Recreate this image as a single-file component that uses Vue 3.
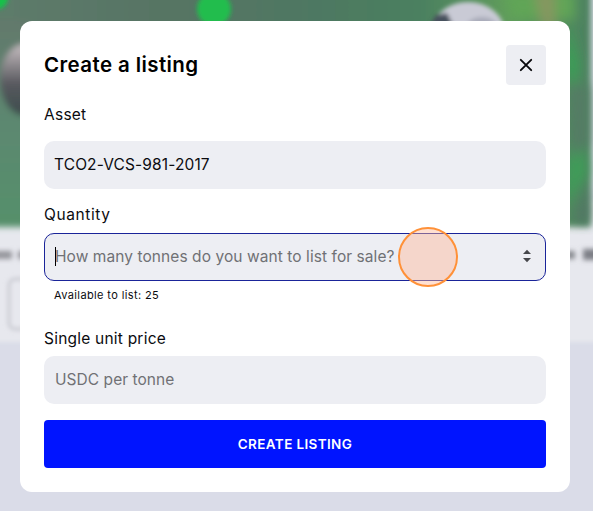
<script setup>
import { ref } from 'vue'

const asset = ref('TCO2-VCS-981-2017')
const available = ref(25)
</script>

<template>
  <main class="page">
    <div class="backdrop" aria-hidden="true">
      <svg width="593" height="511" viewBox="0 0 593 511">
        <defs>
          <filter id="soft" x="-30%" y="-30%" width="160%" height="160%"><feGaussianBlur stdDeviation="3" /></filter>
          <filter id="softer" x="-60%" y="-60%" width="220%" height="220%"><feGaussianBlur stdDeviation="6" /></filter>
          <filter id="edge" x="-30%" y="-30%" width="160%" height="160%"><feGaussianBlur stdDeviation="2" /></filter>
          <filter id="words" filterUnits="userSpaceOnUse" x="-20" y="230" width="640" height="50"><feGaussianBlur stdDeviation="2.6" /></filter>
          <linearGradient id="photo" x1="0" y1="0" x2="1" y2="0">
            <stop offset="0" stop-color="#5e7c6b" />
            <stop offset=".3" stop-color="#577464" />
            <stop offset=".55" stop-color="#4e7862" />
            <stop offset=".72" stop-color="#4b8060" />
            <stop offset=".86" stop-color="#5f9b5c" />
            <stop offset="1" stop-color="#4c8060" />
          </linearGradient>
          <linearGradient id="leftside" x1="0" y1="0" x2="0" y2="1">
            <stop offset="0" stop-color="#63796c" />
            <stop offset=".5" stop-color="#5c8870" />
            <stop offset="1" stop-color="#56906b" />
          </linearGradient>
          <linearGradient id="helmet" x1="0" y1="0" x2="0" y2="1">
            <stop offset="0" stop-color="#c9c0c4" />
            <stop offset=".3" stop-color="#8b878b" />
            <stop offset=".55" stop-color="#58595f" />
            <stop offset="1" stop-color="#3c4c4c" />
          </linearGradient>
        </defs>
        <rect width="593" height="511" fill="#dadce8" />
        <rect x="-20" y="200" width="640" height="142" fill="#e7e8ee" filter="url(#edge)" />
        <g filter="url(#soft)">
          <rect x="-20" y="-20" width="611" height="247" fill="url(#photo)" />
          <rect x="-20" y="20" width="50" height="207" fill="url(#leftside)" />
          <ellipse cx="25" cy="80" rx="25" ry="36" fill="url(#helmet)" />
        </g>
        <g filter="url(#softer)">
          <path d="M503 -10H575V20H510Z" fill="#61a557" />
          <path d="M534 -10H555V40H545Z" fill="#879661" />
          <path d="M568 20L579 65L573 96L566 65Z" fill="#37a155" />
          <path d="M582 115L588 174L566 207V159Z" fill="#419b59" />
          <path d="M570 85H588V143L573 160Z" fill="#557c65" />
          <path d="M588 178V222H576Z" fill="#557366" />
        </g>
        <g filter="url(#edge)">
          <circle cx="214" cy="9" r="17" fill="#20bd4e" />
          <circle cx="-3" cy="-2" r="11" fill="#16c14a" />
          <ellipse cx="468" cy="33" rx="37" ry="31" fill="#c9cad5" />
          <path d="M424 35L436 15L447 13L458 35Z" fill="#46515d" />
          <ellipse cx="482" cy="28" rx="16" ry="11" fill="#a9abb9" />
          <rect x="9" y="279" width="70" height="50" rx="6" fill="none" stroke="#c9cad1" stroke-width="3" />
        </g>
        <g filter="url(#words)">
          <rect x="-8" y="251" width="20" height="8" fill="#94959b" />
          <rect x="18" y="251" width="10" height="8" fill="#94959b" />
          <rect x="566" y="251" width="9" height="8" fill="#85878d" />
          <rect x="583" y="249" width="18" height="11" fill="#7d7f86" />
        </g>
      </svg>
    </div>

    <section class="dialog" role="dialog" aria-labelledby="dialog-title">
      <header class="heading">
        <h1 id="dialog-title">Create a listing</h1>
        <button class="close" type="button" aria-label="Close">
          <svg width="16" height="16" viewBox="0 0 16 16"><path d="M2.8 2.8L13.2 13.2M13.2 2.8L2.8 13.2" /></svg>
        </button>
      </header>

      <div class="label asset-label"><span class="t-asset">Asset</span></div>
      <div class="field"><span class="t-code">{{ asset }}</span></div>

      <div class="label quantity-label"><span class="t-quantity">Quantity</span></div>
      <div class="field active">
        <i class="caret"></i>
        <span class="hint t-how">How many tonnes do you want to list for sale?</span>
        <svg class="stepper" width="8" height="14" viewBox="0 0 8 14"><path d="M0 5L4 .8L8 5ZM0 9L4 13.2L8 9Z" /></svg>
        <i class="click-ring"></i>
      </div>
      <div class="available"><span>Available to list: {{ available }}</span></div>

      <div class="label price-label"><span class="t-price">Single unit price</span></div>
      <div class="field price"><span class="hint t-usdc">USDC per tonne</span></div>

      <button class="submit" type="button"><span>CREATE LISTING</span></button>
    </section>
  </main>
</template>

<style>
body { margin: 0; overflow: hidden; }
</style>

<style scoped>
* { box-sizing: border-box; }
.page {
  position: relative;
  width: 593px;
  height: 511px;
  padding: 21px 23px 19px 20px;
  overflow: hidden;
  font-family: Inter, "Open Sans", sans-serif;
  color: #0b0b0f;
}
.backdrop { position: absolute; inset: 0; }
.backdrop svg { display: block; }
.dialog {
  position: relative;
  display: flex;
  flex-direction: column;
  height: 471px;
  padding: 24px;
  border-radius: 12px;
  background: #fff;
}
.heading { display: flex; align-items: center; justify-content: space-between; height: 40px; }
h1 { margin: 0; font-size: 20.5px; line-height: 30px; font-weight: 600; letter-spacing: .4px; color: #000; }
button { border: 0; padding: 0; font: inherit; }
.close { display: flex; align-items: center; justify-content: center; width: 40px; height: 40px; border-radius: 4px; background: #edeef3; }
.close path { fill: none; stroke: #08080c; stroke-width: 1.9; stroke-linecap: round; }
.label { height: 24px; font-size: 15.5px; line-height: 24px; }
.t-asset { letter-spacing: .25px; }
.t-quantity { letter-spacing: .6px; }
.t-code { margin-left: -1px; letter-spacing: .13px; }
.t-how { letter-spacing: .07px; }
.t-price { letter-spacing: .22px; }
.t-usdc { letter-spacing: .05px; }
.asset-label { margin: 18px 0 14px; }
.quantity-label { margin: 14px 0 6px; }
.field {
  position: relative;
  display: flex;
  align-items: center;
  flex: none;
  height: 48px;
  padding: 0 10px 2px;
  border: 1px solid transparent;
  border-radius: 10px;
  background: #edeef3;
  font-size: 15.5px;
  white-space: nowrap;
}
.active { border-color: #1a2499; }
.hint { color: #707175; }
.caret { width: 1px; height: 19px; margin-right: -1px; background: #000; }
.stepper { margin-left: auto; margin-right: 4px; fill: #46474b; }
.click-ring {
  position: absolute;
  left: 353px;
  top: -7px;
  width: 60px;
  height: 60px;
  border: 2px solid #ff9138;
  border-radius: 50%;
  background: rgba(255, 184, 150, .43);
}
.available { height: 20px; margin: 4px 0 0 10px; font-size: 11px; line-height: 20px; letter-spacing: .38px; }
.price-label { margin: 22px 0 5px; }
.submit {
  flex: none;
  height: 48px;
  margin-top: 16px;
  border-radius: 4px;
  background: #0014ff;
  color: #fff;
  font-size: 13.5px;
  font-weight: 600;
  letter-spacing: .37px;
}
</style>
